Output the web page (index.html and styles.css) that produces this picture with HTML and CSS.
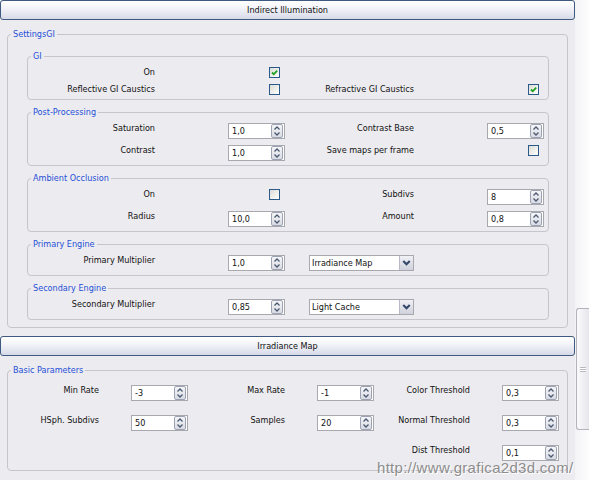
FILE: index.html
```html
<!DOCTYPE html>
<html>
<head>
<meta name="viewport" content="width=device-width, initial-scale=1">
<title>Render Setup - Indirect Illumination</title>
<link rel="stylesheet" href="styles.css">
</head>
<body>

<div class="window">
  <div class="pane">

    <!-- Indirect Illumination rollout -->
    <div class="rollout-title">Indirect Illumination</div>
    <fieldset class="group outer">
      <legend>SettingsGI</legend>
      <div class="outer-body">

        <fieldset class="group">
          <legend>GI</legend>
          <div class="grid">
            <span class="lbl">On</span>
            <span class="ctl"><span class="check on"><svg viewBox="0 0 9 9"><path d="M2 4.5 L3.8 6.3 L7.2 2.6" /></svg></span></span>
            <span></span><span></span>
            <span class="lbl">Reflective GI Caustics</span>
            <span class="ctl"><span class="check"></span></span>
            <span class="lbl">Refractive GI Caustics</span>
            <span class="ctl"><span class="check on"><svg viewBox="0 0 9 9"><path d="M2 4.5 L3.8 6.3 L7.2 2.6" /></svg></span></span>
          </div>
        </fieldset>

        <fieldset class="group">
          <legend>Post-Processing</legend>
          <div class="grid">
            <span class="lbl">Saturation</span>
            <span class="ctl"><span class="spin"><span class="spin-val">1,0</span><span class="spin-btn"></span></span></span>
            <span class="lbl">Contrast Base</span>
            <span class="ctl"><span class="spin"><span class="spin-val">0,5</span><span class="spin-btn"></span></span></span>
            <span class="lbl">Contrast</span>
            <span class="ctl"><span class="spin"><span class="spin-val">1,0</span><span class="spin-btn"></span></span></span>
            <span class="lbl">Save maps per frame</span>
            <span class="ctl"><span class="check"></span></span>
          </div>
        </fieldset>

        <fieldset class="group">
          <legend>Ambient Occlusion</legend>
          <div class="grid">
            <span class="lbl">On</span>
            <span class="ctl"><span class="check"></span></span>
            <span class="lbl">Subdivs</span>
            <span class="ctl"><span class="spin"><span class="spin-val">8</span><span class="spin-btn"></span></span></span>
            <span class="lbl">Radius</span>
            <span class="ctl"><span class="spin"><span class="spin-val">10,0</span><span class="spin-btn"></span></span></span>
            <span class="lbl">Amount</span>
            <span class="ctl"><span class="spin"><span class="spin-val">0,8</span><span class="spin-btn"></span></span></span>
          </div>
        </fieldset>

        <fieldset class="group">
          <legend>Primary Engine</legend>
          <div class="grid">
            <span class="lbl">Primary Multiplier</span>
            <span class="ctl"><span class="spin"><span class="spin-val">1,0</span><span class="spin-btn"></span></span></span>
            <span class="lbl"><span class="combo"><span class="combo-val">Irradiance Map</span><span class="combo-btn"></span></span></span>
            <span></span>
          </div>
        </fieldset>

        <fieldset class="group">
          <legend>Secondary Engine</legend>
          <div class="grid">
            <span class="lbl">Secondary Multiplier</span>
            <span class="ctl"><span class="spin"><span class="spin-val">0,85</span><span class="spin-btn"></span></span></span>
            <span class="lbl"><span class="combo"><span class="combo-val">Light Cache</span><span class="combo-btn"></span></span></span>
            <span></span>
          </div>
        </fieldset>

      </div>
    </fieldset>

    <!-- Irradiance Map rollout -->
    <div class="rollout-title">Irradiance Map</div>
    <fieldset class="group outer">
      <legend>Basic Parameters</legend>
      <div class="grid3">
        <span class="lbl">Min Rate</span>
        <span class="ctl"><span class="spin"><span class="spin-val">-3</span><span class="spin-btn"></span></span></span>
        <span class="lbl">Max Rate</span>
        <span class="ctl"><span class="spin"><span class="spin-val">-1</span><span class="spin-btn"></span></span></span>
        <span class="lbl">Color Threshold</span>
        <span class="ctl"><span class="spin"><span class="spin-val">0,3</span><span class="spin-btn"></span></span></span>

        <span class="lbl">HSph. Subdivs</span>
        <span class="ctl"><span class="spin"><span class="spin-val">50</span><span class="spin-btn"></span></span></span>
        <span class="lbl">Samples</span>
        <span class="ctl"><span class="spin"><span class="spin-val">20</span><span class="spin-btn"></span></span></span>
        <span class="lbl">Normal Threshold</span>
        <span class="ctl"><span class="spin"><span class="spin-val">0,3</span><span class="spin-btn"></span></span></span>

        <span></span><span></span><span></span><span></span>
        <span class="lbl">Dist Threshold</span>
        <span class="ctl"><span class="spin"><span class="spin-val">0,1</span><span class="spin-btn"></span></span></span>
      </div>
    </fieldset>

    <fieldset class="group outer">
      <legend>Basic Options</legend>
      <div class="grid3">
        <span class="lbl">Show Calc. Phase</span>
      </div>
    </fieldset>

  </div>

  <div class="scrollbar">
    <div class="thumb"><span class="grip"></span></div>
  </div>

  <div class="watermark">http://www.grafica2d3d.com/</div>
</div>

<script>
// spinner arrows are the same everywhere, fill them in once
var arrows = '<svg viewBox="0 0 9 12"><path d="M2 4.5 L4.5 2 L7 4.5" /><path d="M2 7.5 L4.5 10 L7 7.5" /></svg>';
var btns = document.getElementsByClassName("spin-btn");
for (var i = 0; i < btns.length; i++) {
  btns[i].innerHTML = arrows;
}
var chev = '<svg viewBox="0 0 10 10"><path d="M2.5 3.5 L5 6 L7.5 3.5" /></svg>';
var combos = document.getElementsByClassName("combo-btn");
for (var j = 0; j < combos.length; j++) {
  combos[j].innerHTML = chev;
}
</script>
</body>
</html>
```

FILE: styles.css
```css
* {box-sizing: border-box}
html, body {
  margin: 0;
  height: 100%;
  overflow: hidden;
}
body {
  font-family: "DejaVu Sans Condensed", "Liberation Sans", sans-serif;
  font-size: 9px;
  color: #111;
  background-color: #ecebef;
}
.window {
  position: relative;
  display: flex;
  height: 480px;
}
.pane {
  width: 575px;
  flex: none;
}

/* rollout header bar */
.rollout-title {
  height: 20px;
  line-height: 18px;
  text-align: center;
  border: 1px solid #3f5a80;
  border-radius: 3px;
  background: linear-gradient(#ffffff, #f1f2f7 45%, #d6dae8);
}

/* group boxes */
fieldset.group {
  margin: 0;
  padding: 0;
  min-width: 0;
  border: 1px solid #c6c5cb;
  border-radius: 4px;
}
fieldset.group legend {
  margin-left: 3px;
  padding: 0 2px;
  line-height: 12px;
  color: #1f50d8;
}
fieldset.outer {
  margin: 8px 7px;
}
.outer-body {
  display: flex;
  flex-direction: column;
  gap: 6px;
  padding: 10px 18px 7px 19px;
}

/* rows of label / control pairs */
.grid {
  display: grid;
  grid-template-columns: 200px 57px 202px 57px;
  row-gap: 6px;
  align-items: start;
  padding: 5px 0 4px 0;
}
.grid3 {
  display: grid;
  grid-template-columns: 123px 57px 129px 57px 128px 57px;
  row-gap: 14px;
  align-items: start;
  padding: 9px 0 9px 0;
}
.lbl {
  line-height: 11px;
  text-align: right;
  padding-right: 73px;
  white-space: nowrap;
}
.grid3 .lbl {
  padding-right: 32px;
}
.ctl {
  display: flex;
  justify-content: flex-end;
}

/* checkbox */
.check {
  display: block;
  width: 11px;
  height: 11px;
  margin-right: 5px;
  border: 1px solid #2a5a8a;
  background: linear-gradient(135deg, #dcdcd6, #ffffff);
}
.check svg {
  display: block;
  width: 9px;
  height: 9px;
  fill: none;
  stroke: #21a121;
  stroke-width: 1.8;
}

/* spinner */
.spin {
  display: flex;
  width: 57px;
  height: 16px;
  border: 1px solid #a9a8ae;
  background-color: #fff;
}
.spin-val {
  flex: 1;
  padding-left: 3px;
  line-height: 14px;
}
.spin-btn {
  width: 12px;
  margin: 0 1px 0 0;
  border: 1px solid #9ba3b4;
  border-radius: 2px;
  background: linear-gradient(#f6f6f8, #d9dbe3);
}
.spin-btn svg {
  display: block;
  width: 10px;
  height: 12px;
  fill: none;
  stroke: #4b5a72;
  stroke-width: 1.3;
}

/* dropdown */
.combo {
  display: inline-flex;
  width: 105px;
  height: 16px;
  border: 1px solid #a9a8ae;
  background-color: #fff;
  text-align: left;
  vertical-align: top;
}
.combo-val {
  flex: 1;
  padding-left: 2px;
  line-height: 14px;
}
.combo-btn {
  width: 14px;
  border-left: 1px solid #b7bac6;
  background: linear-gradient(#f1f1f5, #cfd2dc);
}
.combo-btn svg {
  display: block;
  width: 13px;
  height: 14px;
  fill: none;
  stroke: #33476b;
  stroke-width: 1.6;
}

/* scrollbar on the right */
.scrollbar {
  flex: 1;
  background: linear-gradient(90deg, #f3f3f6, #fdfdfe);
  padding-top: 308px;
}
.thumb {
  height: 122px;
  margin-left: 1px;
  border: 1px solid #b3b3bb;
  border-right: none;
  border-radius: 3px 0 0 3px;
  background: linear-gradient(90deg, #fafafc, #e6e6ec);
  display: flex;
  align-items: center;
  justify-content: center;
}
.grip {
  width: 6px;
  height: 5px;
  border-top: 1px solid #b8b8c0;
  border-bottom: 1px solid #b8b8c0;
  background: linear-gradient(#ffffff 40%, #b8b8c0 40%, #b8b8c0 60%, #ffffff 60%);
}

/* site stamp over the screenshot */
.watermark {
  position: absolute;
  left: 377px;
  top: 459px;
  font-family: "Liberation Sans", sans-serif;
  font-size: 15px;
  letter-spacing: 0.3px;
  color: #8d8d8d;
  text-shadow: 1px 1px 0 #ffffff;
}
```
